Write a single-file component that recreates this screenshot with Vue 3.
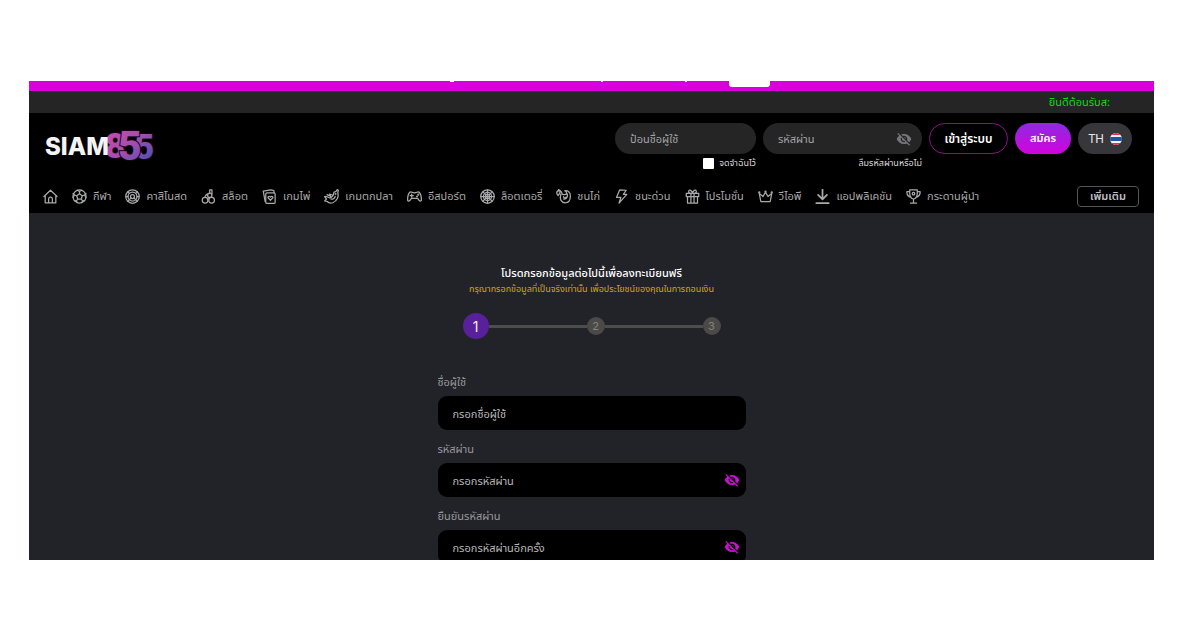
<script setup>
import { ref } from 'vue'

const navItems = [
  { icon: 'ball', label: 'กีฬา' },
  { icon: 'chip', label: 'คาสิโนสด' },
  { icon: 'slot', label: 'สล็อต' },
  { icon: 'cards', label: 'เกมไพ่' },
  { icon: 'fish', label: 'เกมตกปลา' },
  { icon: 'pad', label: 'อีสปอร์ต' },
  { icon: 'lotto', label: 'ล็อตเตอรี่' },
  { icon: 'rooster', label: 'ชนไก่' },
  { icon: 'bolt', label: 'ชนะด่วน' },
  { icon: 'gift', label: 'โปรโมชั่น' },
  { icon: 'crown', label: 'วีไอพี' },
  { icon: 'download', label: 'แอปพลิเคชัน' },
  { icon: 'trophy', label: 'กระดานผู้นำ' },
]

const icons = {
  home: '<path d="M1.500 12 12 2 22.500 12M3.500 10.500V22H20.500V10.500M9 22v-6a3 3 0 0 1 6 0v6"/>',
  ball: '<circle cx="12" cy="12" r="10.500"/><path d="m12 7.500 4.500 3.300-1.700 5.200H9.200l-1.700-5.200zM12 7.500V4L8.500 2M12 4l3.500-2M16.500 10.800l3.500-1.200 2.300-2.600M20 9.600l2.300 4M14.800 16l2.200 3 3.500-.5M17 19l-1.500 3M9.200 16 7 19l-3.500-.5M7 19l1.500 3M7.500 10.800 4 9.600 1.700 7M4 9.600l-2.300 4"/>',
  chip: '<circle cx="12" cy="12" r="10.800"/><circle cx="12" cy="12" r="7.200"/><circle cx="12" cy="12" r="3.200"/><path d="m7 17 2.500-2.500M17 17l-2.500-2.500M4.600 4.600 7 7M1.500 12H5M4.600 19.400 7 17M19.400 19.400 17 17M22.500 12H19M19.400 4.600 17 7"/>',
  slot: '<circle cx="6.500" cy="18" r="4.500"/><circle cx="17" cy="18" r="4.500"/><circle cx="14" cy="10" r="3.500"/><path d="M6 13.500C7 10 9 8 11 8M14 6.500V1.500h3.500V8M10.500 16l2-2.500"/>',
  cards: '<rect x="6" y="6" width="15" height="17" rx="2"/><path d="M5 20 2 3.500 14 1.500l5 1 .5 3.500M13.500 18 10 14.500c-1.500-2 1.500-4 3.500-1.500 2-2.500 5-.5 3.500 1.500z"/>',
  fish: '<path d="M16 5c2 0 4-1 5-4l2 1-1 4c2 6-1 13-8 16-4 1-7 0-9-2l-4-1 3-3-3-4c4-1 5 2 8 2 4 0 6-3 7-9zM11 16c3 1 6-1 7-4M5 9l4 2M11 13 9 8l5 2"/><circle cx="18.500" cy="8" r=".6"/>',
  pad: '<path d="M5 5c2-1 3 1 7 1s5-2 7-1c3 2 4 8 4 12 0 4-3 3-6-2H7c-3 5-6 6-6 2C1 13 2 7 5 5z"/><path d="M7.500 8v5M5 10.500h5"/><circle cx="16" cy="12" r=".7"/><circle cx="18" cy="9" r=".7"/>',
  lotto: '<circle cx="12" cy="12" r="10.800"/><circle cx="12" cy="12" r="6.500"/><path d="M12 1.500v20M1.500 12h21M5 5l3 3M19 5l-3 3M5 19l3-3M19 19l-3-3M9 9h6v6H9z"/>',
  rooster: '<path d="M10 8C9 3 4 1 1.500 4.500c-1 3 0 4 2 6l1.500-3 3 1c-3 8 1 13.500 6.500 13.500 6 0 8.500-5 8.500-11 0-6-4-9-9-8 4 1 4 6 0 6-2 0-4-.5-4-1zM3 4l1-3 3 2M18 8c1 4-1 9-6 8M12 12c0 2 2 3 4 1"/><circle cx="6" cy="5" r=".5"/>',
  bolt: '<path d="M9 1.500 19.500 2 15 8.500h5.500L8 22.500l3-9H4z"/>',
  gift: '<path d="M2 7h20v5H2zM4 12h16v10.500H4zM9.500 7v15.500M14.500 7v15.500M12 7C7 7 5 5.500 6 3s5-1 6 4c1-5 5-6.500 6-4s-1 4-6 4z"/>',
  crown: '<path d="M4.500 20 2 7l6 5 4-7 4 7 6-5-2.500 13z"/><circle cx="2" cy="5.500" r=".8"/><circle cx="12" cy="4" r=".8"/><circle cx="22" cy="5.500" r=".8"/>',
  download: '<path stroke-width="2.800" d="M12 1v15M5 9.500l7 7 7-7M2 22.500h20"/>',
  trophy: '<path d="M6 1.500h12V7c0 6-2 8-6 9-4-1-6-3-6-9zM6 4H1.500C1 9 3 12 8 13M18 4h4.500c.5 5-1.500 8-6.500 9M12 16v6M7 22.500h10"/><circle cx="12" cy="7.500" r="2"/>',
}

const eyeOff = 'M12 7c2.760 0 5 2.240 5 5 0 .65-.13 1.260-.36 1.830l2.920 2.920c1.510-1.260 2.700-2.890 3.430-4.750-1.730-4.390-6-7.500-11-7.500-1.400 0-2.740.25-3.980.7l2.160 2.160C10.740 7.130 11.350 7 12 7zM2 4.270l2.280 2.280.46.46C3.080 8.300 1.780 10.020 1 12c1.730 4.390 6 7.500 11 7.500 1.550 0 3.030-.3 4.380-.84l.42.42L19.730 22 21 20.730 3.270 3 2 4.270zM7.530 9.800l1.550 1.550c-.05.21-.08.43-.08.65 0 1.660 1.340 3 3 3 .22 0 .44-.03.65-.08l1.550 1.550c-.67.33-1.410.53-2.200.53-2.760 0-5-2.240-5-5 0-.79.2-1.530.53-2.200zm4.310-.78l3.150 3.150.02-.16c0-1.660-1.340-3-3-3l-.17.01z'

const fields = ref([
  { id: 'reg-user', label: 'ชื่อผู้ใช้', placeholder: 'กรอกชื่อผู้ใช้', secret: false, shown: true },
  { id: 'reg-pass', label: 'รหัสผ่าน', placeholder: 'กรอกรหัสผ่าน', secret: true, shown: false },
  { id: 'reg-again', label: 'ยืนยันรหัสผ่าน', placeholder: 'กรอกรหัสผ่านอีกครั้ง', secret: true, shown: false },
])
const loginShown = ref(false)
</script>

<template>
  <div class="page">
    <div class="site">
      <div class="promo"><i class="tail t1"></i><i class="tail t2"></i><i class="tail t3"></i><i class="promo-tab"></i></div>
      <div class="ticker">ยินดีต้อนรับส:</div>
      <header class="header">
        <div class="top">
          <a href="#" class="logo" aria-label="SIAM855">
            <svg width="112" height="34" viewBox="0 0 112 34">
              <defs>
                <linearGradient id="lg" gradientUnits="userSpaceOnUse" x1="70" y1="2" x2="100" y2="34">
                  <stop offset="0" stop-color="#c04cac" /><stop offset=".5" stop-color="#a04fae" /><stop offset="1" stop-color="#5550b4" />
                </linearGradient>
              </defs>
              <g class="nums" fill="url(#lg)">
                <text x="60" y="29" font-size="35">8</text>
                <text x="89" y="30" font-size="35">5</text>
                <text x="73" y="31" font-size="41">5</text>
              </g>
              <text x="0" y="26" class="siam">SIAM</text>
            </svg>
          </a>
          <form class="login" @submit.prevent>
            <div class="cell user">
              <input class="pill" type="text" aria-label="ป้อนชื่อผู้ใช้" placeholder="ป้อนชื่อผู้ใช้" />
              <label class="remember"><input type="checkbox" /><span>จดจำฉันไว้</span></label>
            </div>
            <div class="cell pass">
              <div class="box">
                <input class="pill" :type="loginShown ? 'text' : 'password'" aria-label="รหัสผ่าน" placeholder="รหัสผ่าน" />
                <button type="button" class="eye" aria-label="แสดงรหัสผ่าน" @click="loginShown = !loginShown"><svg viewBox="0 0 24 24"><path :d="eyeOff" /></svg></button>
              </div>
              <a href="#" class="forgot">ลืมรหัสผ่านหรือไม่</a>
            </div>
            <button class="btn signin">เข้าสู่ระบบ</button>
            <button type="button" class="btn signup">สมัคร</button>
            <button type="button" class="btn lang">TH
              <svg width="12" height="12" viewBox="0 0 12 12"><clipPath id="fc"><circle cx="6" cy="6" r="6" /></clipPath><g clip-path="url(#fc)"><path fill="#f3f3f5" d="M0 0h12v12H0z" /><path fill="#e0304a" d="M0 0h12v2H0zM0 10h12v2H0z" /><path fill="#2452a4" d="M0 4h12v4H0z" /></g></svg>
            </button>
          </form>
        </div>
        <nav class="nav">
          <a href="#" class="item" aria-label="หน้าแรก"><svg class="ico" viewBox="0 0 24 24" v-html="icons.home"></svg></a>
          <a v-for="n in navItems" :key="n.icon" href="#" class="item"><svg class="ico" viewBox="0 0 24 24" v-html="icons[n.icon]"></svg><span>{{ n.label }}</span></a>
          <button class="more">เพิ่มเติม</button>
        </nav>
      </header>
      <main class="main">
        <h1>โปรดกรอกข้อมูลต่อไปนี้เพื่อลงทะเบียนฟรี</h1>
        <p class="note">กรุณากรอกข้อมูลที่เป็นจริงเท่านั้น เพื่อประโยชน์ของคุณในการถอนเงิน</p>
        <div class="steps">
          <span class="step on">1</span><i class="line"></i><span class="step">2</span><i class="line"></i><span class="step">3</span>
        </div>
        <form class="fields" @submit.prevent>
          <div v-for="f in fields" :key="f.id" class="field">
            <label :for="f.id">{{ f.label }}</label>
            <div class="box">
              <input :id="f.id" :type="f.shown ? 'text' : 'password'" :placeholder="f.placeholder" />
              <button v-if="f.secret" type="button" class="eye pink" aria-label="แสดงรหัสผ่าน" @click="f.shown = !f.shown"><svg viewBox="0 0 24 24"><path :d="eyeOff" /></svg></button>
            </div>
          </div>
        </form>
      </main>
    </div>
  </div>
</template>

<style>
body { background: #fff; }
</style>

<style scoped>
* { box-sizing: border-box; }
.page { height: 100vh; padding: 81px 46px 68px 29px; display: flex; font-family: "Noto Sans", "Noto Sans Thai", Tahoma, Loma, sans-serif; }
.site { flex: 1; min-width: 0; overflow: hidden; background: #222329; display: flex; flex-direction: column; }
input, button { font-family: inherit; border: 0; outline: 0; margin: 0; padding: 0; }
button { cursor: pointer; }
a { text-decoration: none; color: inherit; }
.promo { flex: none; height: 10px; background: #d900dd; position: relative; }
.promo-tab { position: absolute; top: 0; left: 700px; width: 41px; height: 6px; background: #fff; border-radius: 0 0 3px 3px; }
.tail { position: absolute; top: 0; width: 2px; height: 1px; background: #fff; }
.t1 { left: 421px; width: 4px; } .t2 { left: 572px; } .t3 { left: 656px; }
.ticker { flex: none; height: 22px; line-height: 22px; background: #252525; color: #14d714; font-size: 11px; text-align: right; padding-right: 44px; }
.header { flex: none; background: #000; height: 100px; display: flex; flex-direction: column; justify-content: space-between; }
.top { display: flex; justify-content: space-between; align-items: flex-start; padding: 10px 22px 0 16px; }
.logo { margin-top: 6px; }
.logo svg { display: block; overflow: visible; }
.siam { font: 800 24px Inter, sans-serif; fill: #f4f4f4; }
.nums text { font-family: Roboto, sans-serif; font-weight: 900; stroke: #16051a; stroke-width: 2px; paint-order: stroke; }
.login { display: flex; gap: 7px; align-items: flex-start; }
.cell { display: flex; flex-direction: column; align-items: flex-end; gap: 3px; }
.user { width: 141px; }
.pass { width: 159px; }
.box { position: relative; width: 100%; display: flex; }
.pill { width: 100%; height: 31px; border-radius: 16px; background: #252525; padding: 0 15px; color: #ccc; font-size: 11px; }
.pill::placeholder { color: #a2a3a7; opacity: 1; }
.remember, .forgot { display: flex; align-items: center; gap: 5px; height: 12px; line-height: 12px; color: #d8d8d8; font-size: 9px; white-space: nowrap; }
.remember input { appearance: none; width: 11px; height: 11px; background: #fff; border-radius: 1px; }
.eye { position: absolute; right: 10px; top: 0; bottom: 0; width: 16px; background: none; color: #77777b; display: flex; align-items: center; }
.eye svg { width: 16px; height: 16px; fill: currentColor; }
.eye.pink { color: #c90fd0; right: 6px; }
.btn { height: 31px; border-radius: 16px; color: #fff; font-size: 11px; font-weight: 600; white-space: nowrap; }
.signin { width: 79px; background: #000; border: 1px solid #8d118f; font-size: 12px; }
.signup { width: 56px; background: linear-gradient(#8d2be0, #d203dc); }
.lang { width: 54px; background: #37373b; color: #e5e5e5; font-weight: 400; font-size: 12px; font-family: Roboto, sans-serif; display: flex; align-items: center; justify-content: center; gap: 6px; }
.nav { display: flex; align-items: center; gap: 14px; padding: 0 15px 6px 14px; color: #a9a9ab; font-size: 11px; white-space: nowrap; }
.item { display: flex; align-items: center; gap: 6px; }
.ico { width: 15px; height: 15px; fill: none; stroke: #a9a9ab; stroke-width: 2; stroke-linejoin: round; stroke-linecap: round; }
.more { margin-left: auto; width: 62px; height: 21px; border: 1px solid #55555a; border-radius: 4px; background: #000; color: #c0c0c8; font-size: 11px; font-weight: 600; }
.main { flex: none; display: flex; flex-direction: column; align-items: center; padding-top: 52px; }
h1 { margin: 0; font-size: 11px; line-height: 16px; font-weight: 500; color: #fff; white-space: nowrap; }
.note { margin: 0; font-size: 9px; line-height: 16px; color: #d5a514; white-space: nowrap; }
.steps { display: flex; align-items: center; width: 258px; margin-top: 16px; font-family: Inter, sans-serif; }
.step { width: 18px; height: 18px; border-radius: 50%; background: #4b4a48; color: #85837e; display: flex; align-items: center; justify-content: center; font-size: 11px; }
.step.on { width: 26px; height: 26px; background: #58209a; color: #eee; font-size: 14px; }
.line { flex: 1; height: 3px; background: #4e4d4c; }
.fields { width: 308px; margin-top: 33px; }
.field { margin-bottom: 9px; }
.field label { display: block; height: 24px; line-height: 20px; font-size: 11px; color: #98989c; }
.field input { width: 100%; height: 34px; border-radius: 9px; background: #000; padding: 0 15px; color: #ccc; font-size: 11px; }
.field input::placeholder { color: #b8b8bc; opacity: 1; }
</style>
